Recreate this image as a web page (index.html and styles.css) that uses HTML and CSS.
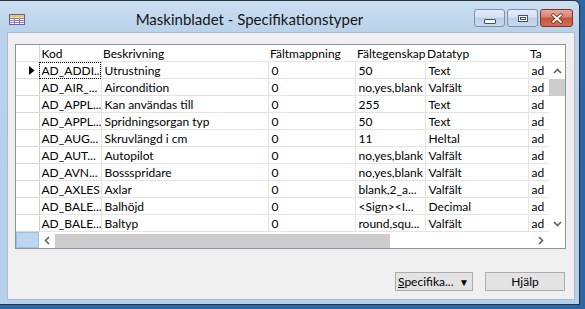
FILE: index.html
```html
<!DOCTYPE html>
<html><head>
<meta charset="UTF-8">
<title>Maskinbladet - Specifikationstyper</title>
<link rel="stylesheet" href="styles.css">
</head>
<body>
<div class="window">
    <div class="titlebar">
        <!-- small table icon -->
        <svg class="app-icon" width="16" height="11" viewBox="0 0 16 11">
            <rect x="0.5" y="0.5" width="15" height="10" fill="#fff" stroke="#6a5aa8"/>
            <rect x="1" y="1" width="14" height="2.5" fill="#f2c94c"/>
            <path d="M1 4.5h14M1 6.5h14M1 8.5h14M5.5 3.5v7M10.5 3.5v7" stroke="#8c7cc4" stroke-width="1"/>
        </svg>
        <div class="title">Maskinbladet - Specifikationstyper</div>
        <div class="caption-buttons">
            <div class="cap-btn">
                <span class="glyph-min"></span>
            </div>
            <div class="cap-btn">
                <span class="glyph-max"></span>
            </div>
            <div class="cap-btn close">
                <svg width="14" height="11" viewBox="0 0 14 11">
                    <path d="M3 2l8 7M11 2l-8 7" stroke="#5a2a22" stroke-width="3.4" stroke-linecap="round"/>
                    <path d="M3 2l8 7M11 2l-8 7" stroke="#fff" stroke-width="1.8" stroke-linecap="round"/>
                </svg>
            </div>
        </div>
    </div>

    <div class="client">
        <div class="grid">
            <div class="grid-header">
                <table>
                    <colgroup>
                        <col class="c-sel"><col class="c-kod"><col class="c-besk"><col class="c-map"><col class="c-egen"><col class="c-typ"><col class="c-ta">
                    </colgroup>
                    <tr>
                        <th class="sel"></th>
                        <th>Kod</th>
                        <th>Beskrivning</th>
                        <th>Fältmappning</th>
                        <th>Fältegenskap</th>
                        <th>Datatyp</th>
                        <th>Ta</th>
                    </tr>
                </table>
            </div>

            <div class="grid-body">
                <table>
                    <colgroup>
                        <col class="c-sel"><col class="c-kod"><col class="c-besk"><col class="c-map"><col class="c-egen"><col class="c-typ"><col class="c-ta">
                    </colgroup>
                    <tr>
                        <td class="sel"><svg width="6" height="9" viewBox="0 0 6 9"><path d="M0 0l5.5 4.5L0 9z" fill="#000"/></svg></td>
                        <td class="kod focus">AD_ADDI...</td><td>Utrustning</td><td>0</td><td>50</td><td>Text</td><td>ad</td>
                    </tr>
                    <tr><td class="sel"></td><td class="kod">AD_AIR_...</td><td>Aircondition</td><td>0</td><td>no,yes,blank</td><td>Valfält</td><td>ad</td></tr>
                    <tr><td class="sel"></td><td class="kod">AD_APPL...</td><td>Kan användas till</td><td>0</td><td>255</td><td>Text</td><td>ad</td></tr>
                    <tr><td class="sel"></td><td class="kod">AD_APPL...</td><td>Spridningsorgan typ</td><td>0</td><td>50</td><td>Text</td><td>ad</td></tr>
                    <tr><td class="sel"></td><td class="kod">AD_AUG...</td><td>Skruvlängd i cm</td><td>0</td><td>11</td><td>Heltal</td><td>ad</td></tr>
                    <tr><td class="sel"></td><td class="kod">AD_AUT...</td><td>Autopilot</td><td>0</td><td>no,yes,blank</td><td>Valfält</td><td>ad</td></tr>
                    <tr><td class="sel"></td><td class="kod">AD_AVN...</td><td>Bossspridare</td><td>0</td><td>no,yes,blank</td><td>Valfält</td><td>ad</td></tr>
                    <tr><td class="sel"></td><td class="kod">AD_AXLES</td><td>Axlar</td><td>0</td><td>blank,2_a...</td><td>Valfält</td><td>ad</td></tr>
                    <tr><td class="sel"></td><td class="kod">AD_BALE...</td><td>Balhöjd</td><td>0</td><td>&lt;Sign&gt;&lt;I...</td><td>Decimal</td><td>ad</td></tr>
                    <tr><td class="sel"></td><td class="kod">AD_BALE...</td><td>Baltyp</td><td>0</td><td>round,squ...</td><td>Valfält</td><td>ad</td></tr>
                </table>
            </div>

            <div class="vscroll">
                <div class="arrow">
                    <svg width="9" height="6" viewBox="0 0 9 6"><path d="M1 5l3.5-3.5L8 5" fill="none" stroke="#606060" stroke-width="1.6"/></svg>
                </div>
                <div class="vthumb"></div>
                <div class="track"></div>
                <div class="arrow">
                    <svg width="9" height="6" viewBox="0 0 9 6"><path d="M1 1l3.5 3.5L8 1" fill="none" stroke="#606060" stroke-width="1.6"/></svg>
                </div>
            </div>

            <div class="hscroll-row">
                <div class="corner-sel"></div>
                <div class="hscroll">
                    <div class="arrow">
                        <svg width="6" height="9" viewBox="0 0 6 9"><path d="M5 1L1.5 4.5 5 8" fill="none" stroke="#606060" stroke-width="1.6"/></svg>
                    </div>
                    <div class="hthumb"></div>
                    <div class="track"></div>
                    <div class="arrow">
                        <svg width="6" height="9" viewBox="0 0 6 9"><path d="M1 1l3.5 3.5L1 8" fill="none" stroke="#606060" stroke-width="1.6"/></svg>
                    </div>
                </div>
                <div class="corner"></div>
            </div>
        </div>

        <div class="actions">
            <button class="btn btn-menu"><span><u>S</u>pecifika...</span><span class="caret">▼</span></button>
            <button class="btn">Hjälp</button>
        </div>
    </div>
</div>
</body></html>
```

FILE: styles.css
```css
body {
    margin: 0;
    background-color: #2a66a8;
    font-family: Lato, "Liberation Sans", sans-serif;
    font-size: 12px;
    color: #000;
}

.window {
    width: 580px;
    height: 305px;
    box-sizing: border-box;
    border: 1px solid #2b323c;
    border-left: none;
    border-top-right-radius: 6px;
    background: linear-gradient(to bottom, #cbdff3 0, #b9d1ea 32px, #b6cfea 100%);
    padding: 0 4px 4px 7px;
    display: flex;
    flex-direction: column;
}

.titlebar {
    height: 31px;
    box-sizing: border-box;
    padding-top: 8px;
    display: flex;
    align-items: flex-start;
}

.app-icon {
    margin: 5px 0 0 2px;
    flex: none;
}

.title {
    flex: 1;
    text-align: center;
    font-size: 15px;
    line-height: 20px;
    color: #151515;
}

.caption-buttons {
    display: flex;
    gap: 2px;
    margin-right: 2px;
}

.cap-btn {
    width: 31px;
    height: 18px;
    box-sizing: border-box;
    border: 1px solid #7c8ea9;
    border-radius: 3px;
    background: linear-gradient(to bottom, #e4edf8 0%, #d2e0f1 45%, #bccfe8 50%, #c9daf0 100%);
    display: flex;
    justify-content: center;
    align-items: center;
}

.cap-btn.close {
    width: 33px;
    border-color: #7a3328;
    background: linear-gradient(to bottom, #e9a89b 0%, #d8806d 45%, #c6513c 50%, #d66f55 100%);
}

.glyph-min {
    width: 10px;
    height: 3px;
    margin-top: 6px;
    background: #fff;
    border: 1px solid #435067;
    border-radius: 1px;
}

.glyph-max {
    width: 8px;
    height: 5px;
    border: 1px solid #435067;
    box-shadow: inset 0 0 0 1px #fff, inset 0 0 0 2px #435067;
    background: #fff;
}

.client {
    flex: 1;
    background-color: #f0f0f0;
    border: 1px solid #a6bdd7;
    padding: 11px 8px 8px 7px;
    display: flex;
    flex-direction: column;
}

/* data grid */
.grid {
    width: 551px;
    box-sizing: border-box;
    border: 1px solid #8f949b;
    background-color: #fff;
    display: grid;
    grid-template-columns: 533px 16px;
    grid-template-rows: 17px 170px 16px;
}

.grid-header {
    grid-column: 1 / 3;
    overflow: hidden;
}

.grid-body {
    overflow: hidden;
}

.grid table {
    table-layout: fixed;
    border-collapse: collapse;
    width: 572px;
    font-size: 12px;
}

.c-sel { width: 23px; }
.c-kod { width: 62px; }
.c-besk { width: 167px; }
.c-map { width: 87px; }
.c-egen { width: 70px; }
.c-typ { width: 103px; }
.c-ta { width: 60px; }

.grid th {
    height: 14px;
    padding: 2px 0 0 2px;
    font-weight: normal;
    text-align: left;
    white-space: nowrap;
    overflow: hidden;
    line-height: 14px;
    border-bottom: 1px solid #e6e6e6;
}

.grid th.sel {
    border-right: 1px solid #d8d8d8;
}

.grid td {
    height: 14px;
    padding: 2px 0 0 3px;
    line-height: 14px;
    white-space: nowrap;
    overflow: hidden;
    border-right: 1px solid #e4e4e4;
    border-bottom: 1px solid #e4e4e4;
}

.grid td.kod {
    padding-left: 2px;
}

.grid td.sel {
    padding: 1px 0 0 13px;
    border-right: 1px solid #cfcfcf;
    border-bottom: 1px solid #d8d8d8;
}

.grid td.sel svg {
    display: block;
}

.grid td.focus {
    outline: 1px dotted #000;
    outline-offset: -1px;
}

.vscroll {
    display: flex;
    flex-direction: column;
    background-color: #fff;
}

.vscroll .arrow {
    height: 17px;
    display: flex;
    justify-content: center;
    align-items: center;
}

.vthumb {
    height: 17px;
    background-color: #cdcdcd;
}

.track {
    flex: 1;
}

.hscroll-row {
    grid-column: 1 / 3;
    display: flex;
}

.corner-sel {
    flex: none;
    width: 23px;
    box-sizing: border-box;
    background-color: #bcd5f1;
    border: 1px solid #a6bfdc;
}

.hscroll {
    width: 510px;
    display: flex;
    background-color: #fff;
}

.hscroll .arrow {
    width: 16px;
    display: flex;
    justify-content: center;
    align-items: center;
}

.hthumb {
    width: 335px;
    margin: 2px 0 0;
    background-color: #cdcdcd;
}

.corner {
    flex: 1;
    background-color: #fff;
}

/* bottom buttons */
.actions {
    margin-top: auto;
    display: flex;
    justify-content: flex-end;
    gap: 12px;
    padding-right: 1px;
}

.btn {
    width: 80px;
    height: 19px;
    padding: 0;
    font-family: Lato, "Liberation Sans", sans-serif;
    font-size: 12px;
    color: #000;
    background-color: #e3e3e3;
    border: 1px solid #acacac;
    display: flex;
    justify-content: center;
    align-items: center;
}

.btn-menu {
    width: 78px;
    justify-content: space-between;
    padding: 0 3px 0 2px;
}

.caret {
    font-size: 10px;
}
```
